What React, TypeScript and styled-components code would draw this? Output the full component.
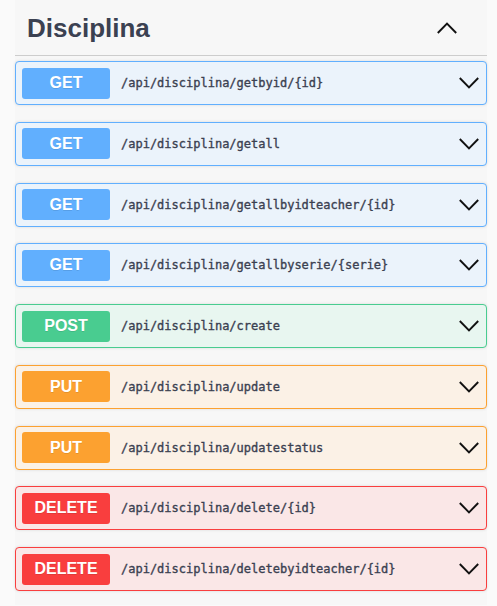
import React from "react";
import styled, { createGlobalStyle } from "styled-components";

const Global = createGlobalStyle`
  html, body { margin: 0; padding: 0; background: #fafafa; }
  body { font-family: "Liberation Sans", Arial, sans-serif; }
`;

type Method = "GET" | "POST" | "PUT" | "DELETE";

const colors: Record<Method, { main: string; bg: string }> = {
  GET: { main: "#61affe", bg: "#ebf3fb" },
  POST: { main: "#49cc90", bg: "#e8f6f0" },
  PUT: { main: "#fca130", bg: "#fbf1e6" },
  DELETE: { main: "#f93e3e", bg: "#fae7e7" },
};

const Section = styled.section`
  margin: 0 10px 0 15px;
  background: #f7f7f7;
  padding-bottom: 14px;
`;

const Header = styled.div`
  display: flex;
  align-items: center;
  justify-content: space-between;
  height: 56px;
  padding: 0 30px 0 12px;
  border-bottom: 1px solid #cdcdcd;
  box-sizing: border-box;
`;

const Title = styled.h3`
  margin: 0;
  font-family: "Liberation Sans", Arial, sans-serif;
  font-size: 26px;
  font-weight: 700;
  color: #3b4151;
  padding-top: 2px;
`;

const List = styled.div`
  display: flex;
  flex-direction: column;
  gap: 16.75px;
  padding-top: 5px;
`;

const Block = styled.div<{ $m: Method }>`
  display: flex;
  align-items: center;
  height: 44px;
  box-sizing: border-box;
  border: 1px solid ${(p) => colors[p.$m].main};
  background: ${(p) => colors[p.$m].bg};
  border-radius: 4px;
  padding: 0 7px 0 6px;
  box-shadow: 0 0 3px rgba(0, 0, 0, 0.12);
`;

const Badge = styled.span<{ $m: Method }>`
  display: flex;
  align-items: center;
  justify-content: center;
  width: 88px;
  height: 31px;
  flex: none;
  border-radius: 3px;
  background: ${(p) => colors[p.$m].main};
  color: #fff;
  font-family: "Liberation Sans", Arial, sans-serif;
  font-weight: 700;
  font-size: 16px;
  text-shadow: 0 1px 0 rgba(0, 0, 0, 0.1);
`;

const Path = styled.span`
  flex: 1;
  margin-left: 11px;
  font-family: "DejaVu Sans Mono", monospace;
  font-size: 12px;
  font-weight: 400;
  color: #3b4151;
  -webkit-text-stroke: 0.35px #3b4151;
`;

const Chevron = ({ up }: { up?: boolean }) => (
  <svg width="20" height="12" viewBox="0 0 20 12" fill="none">
    <polyline
      points={up ? "0.8,11 10,1.6 19.2,11" : "0.8,1 10,10.4 19.2,1"}
      stroke="#111"
      strokeWidth="1.9"
      fill="none"
    />
  </svg>
);

const ops: [Method, string][] = [
  ["GET", "/api/disciplina/getbyid/{id}"],
  ["GET", "/api/disciplina/getall"],
  ["GET", "/api/disciplina/getallbyidteacher/{id}"],
  ["GET", "/api/disciplina/getallbyserie/{serie}"],
  ["POST", "/api/disciplina/create"],
  ["PUT", "/api/disciplina/update"],
  ["PUT", "/api/disciplina/updatestatus"],
  ["DELETE", "/api/disciplina/delete/{id}"],
  ["DELETE", "/api/disciplina/deletebyidteacher/{id}"],
];

export default function App() {
  return (
    <>
      <Global />
      <Section>
        <Header>
          <Title>Disciplina</Title>
          <Chevron up />
        </Header>
        <List>
          {ops.map(([m, p]) => (
            <Block key={p} $m={m}>
              <Badge $m={m}>{m}</Badge>
              <Path>{p}</Path>
              <Chevron />
            </Block>
          ))}
        </List>
      </Section>
    </>
  );
}
